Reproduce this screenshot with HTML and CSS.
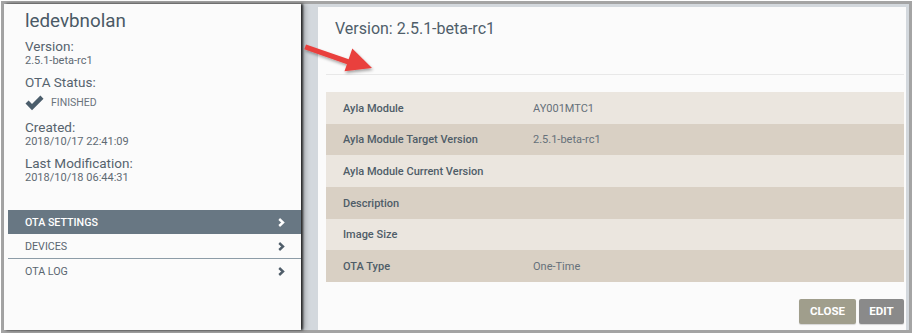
FILE: index.html
```html
<!DOCTYPE html>
<html>
<head>
<meta charset="utf-8">
<link rel="stylesheet" href="styles.css">
</head>
<body>
<div class="frame">
  <aside class="side">
    <div class="info">
      <div class="name">ledevbnolan</div>
      <div class="label first">Version:</div>
      <div class="value">2.5.1-beta-rc1</div>
      <div class="label">OTA Status:</div>
      <div class="status">
        <svg class="check" width="19" height="16" viewBox="0 0 19 16"><path d="M0.5 8.6 L3.6 5.6 L7 9 L15.4 0.6 L18.5 3.7 L7 15.2 Z" fill="#4b5d6b"/></svg>
        <span class="status-text">FINISHED</span>
      </div>
      <div class="label mid">Created:</div>
      <div class="value">2018/10/17 22:41:09</div>
      <div class="label">Last Modification:</div>
      <div class="value">2018/10/18 06:44:31</div>
    </div>
    <nav class="menu">
      <div class="item active"><span>OTA SETTINGS</span><svg class="chev" width="7" height="9" viewBox="0 0 7 9"><path d="M1.2 1 L5 4.5 L1.2 8" fill="none" stroke="currentColor" stroke-width="2.4"/></svg></div>
      <div class="item bordered"><span>DEVICES</span><svg class="chev" width="7" height="9" viewBox="0 0 7 9"><path d="M1.2 1 L5 4.5 L1.2 8" fill="none" stroke="currentColor" stroke-width="2.4"/></svg></div>
      <div class="item"><span>OTA LOG</span><svg class="chev" width="7" height="9" viewBox="0 0 7 9"><path d="M1.2 1 L5 4.5 L1.2 8" fill="none" stroke="currentColor" stroke-width="2.4"/></svg></div>
    </nav>
  </aside>
  <main class="detail">
    <h1 class="title">Version: 2.5.1-beta-rc1</h1>
    <div class="sep"></div>
    <div class="table">
      <div class="row"><div class="k">Ayla Module</div><div class="v">AY001MTC1</div></div>
      <div class="row"><div class="k">Ayla Module Target Version</div><div class="v">2.5.1-beta-rc1</div></div>
      <div class="row"><div class="k">Ayla Module Current Version</div><div class="v"></div></div>
      <div class="row"><div class="k">Description</div><div class="v"></div></div>
      <div class="row"><div class="k">Image Size</div><div class="v"></div></div>
      <div class="row"><div class="k">OTA Type</div><div class="v">One-Time</div></div>
    </div>
    <div class="actions">
      <button class="btn close">CLOSE</button>
      <button class="btn edit">EDIT</button>
    </div>
  </main>
  <svg class="arrow" width="120" height="60" viewBox="0 0 120 60">
    <defs>
      <filter id="sh" x="-20%" y="-20%" width="140%" height="160%">
        <feDropShadow dx="1" dy="2" stdDeviation="1.5" flood-color="#000" flood-opacity="0.35"/>
      </filter>
    </defs>
    <g filter="url(#sh)" fill="#e9403d">
      <path d="M5 3.5 L48.5 18.6 L46.8 23.4 L3.3 8.3 Z"/>
      <path d="M71 27 L51.3 7.5 L43.5 30.3 Z"/>
    </g>
  </svg>
</div>
</body>
</html>
```

FILE: styles.css
```css
* { box-sizing: border-box; }
html, body { margin: 0; padding: 0; background: #ffffff; }
body {
  font-family: Roboto, "Liberation Sans", Arial, sans-serif;
  color: #4e5c68;
}
.frame {
  position: relative;
  margin: 1px 0 0 1px;
  width: 911px;
  height: 332px;
  border: 3px solid #a4a4a4;
  background: #d3d8dd;
  display: flex;
}
.side {
  width: 297px;
  flex: none;
  background: #fbfbfb;
  box-shadow: 2px 0 2px rgba(0,0,0,0.75), 4px 0 5px rgba(0,0,0,0.25);
  position: relative;
  z-index: 1;
  display: flex;
  flex-direction: column;
}
.info {
  padding: 5px 0 0 21px;
}
.name {
  font-size: 18.8px;
  line-height: 24px;
  color: #4a5966;
}
.label {
  font-size: 13.5px;
  line-height: 16px;
  margin-top: 7px;
  color: #56636e;
}
.label.first { margin-top: 5px; }
.label.mid { margin-top: 5px; }
.value {
  font-size: 11px;
  line-height: 13px;
  color: #5f6a73;
}
.status {
  display: flex;
  align-items: center;
  height: 23px;
  margin-top: 1px;
}
.check { flex: none; }
.status-text {
  margin-left: 7px;
  font-size: 10.5px;
  line-height: 14px;
  color: #6a737b;
}
.menu {
  margin: 26px 0 0 4px;
}
.item {
  height: 24px;
  display: flex;
  align-items: center;
  justify-content: space-between;
  padding: 0 16px 0 17px;
  font-size: 10.7px;
  color: #5a6670;
}
.item .chev { color: #4f5d69; }
.item.active {
  background: #687783;
  color: #ffffff;
  font-weight: 500;
}
.item.active .chev { color: #ffffff; }
.item.bordered {
  height: 25px;
  border-bottom: 1px solid #8d9ca7;
}
.detail {
  width: 588px;
  flex: none;
  margin: 3px 3px 0 17px;
  background: #fbfbfb;
  display: flex;
  flex-direction: column;
  padding: 12px 2px 0 8px;
}
.title {
  margin: 0 0 0 9px;
  font-size: 16px;
  line-height: 20px;
  font-weight: 400;
  color: #4f5e6a;
}
.sep {
  margin-top: 35px;
  height: 1px;
  background: #e8e8e8;
}
.table {
  margin-top: 17px;
}
.row {
  height: 31.67px;
  display: flex;
  align-items: center;
  padding-top: 1px;
  background: #ebe6df;
  font-size: 11px;
}
.row:nth-child(even) { background: #d9d0c4; }
.k {
  width: 207px;
  padding-left: 17px;
  font-weight: 500;
  color: #4f5d68;
}
.v {
  color: #66707a;
}
.actions {
  margin-top: 17px;
  display: flex;
  justify-content: flex-end;
  gap: 3px;
}
.btn {
  height: 25px;
  border: none;
  border-radius: 2px;
  color: #ffffff;
  font-family: Roboto, "Liberation Sans", Arial, sans-serif;
  font-size: 11.5px;
  font-weight: 700;
  padding: 0;
  box-shadow: 0 1px 1px rgba(0,0,0,0.15);
}
.btn.close { width: 57px; background: #a09e8c; }
.btn.edit { width: 45px; background: #8a8a8a; }
.arrow {
  position: absolute;
  left: 297px;
  top: 37px;
  z-index: 2;
  overflow: visible;
}
```
